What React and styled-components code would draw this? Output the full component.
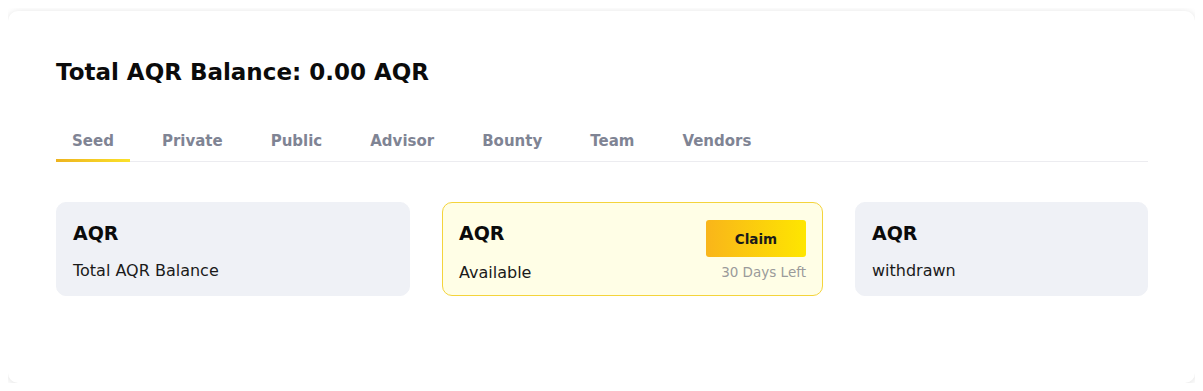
import React, { useState } from "react"
import styled, { createGlobalStyle } from "styled-components"

const Global = createGlobalStyle`
    body {
        margin: 8px;
        background: #ffffff;
        font-family: "DejaVu Sans", "Open Sans", sans-serif;
    }
`

const Panel = styled.div`
    margin-top: 3px;
    width: 1187px;
    box-sizing: border-box;
    padding: 46px 47px 87px 48px;
    background: #ffffff;
    border-radius: 10px;
    box-shadow: 0 1px 7px rgba(0, 0, 0, 0.13);
`

const Title = styled.h2`
    margin: 0;
    font-size: 23px;
    line-height: 30px;
    font-weight: 700;
    color: #0b0b0b;
`

const Tabs = styled.div`
    display: flex;
    gap: 16px;
    margin-top: 43px;
    border-bottom: 1px solid #ececf0;
`

const Tab = styled.button`
    background: none;
    border: none;
    padding: 0 16px 7px;
    font-family: inherit;
    font-size: 15px;
    line-height: 22px;
    font-weight: 700;
    color: #7f8494;
    cursor: pointer;
    border-bottom: 3px solid transparent;
    border-image: ${p => p.$active ? "linear-gradient(90deg, #edb31f, #fbe22b) 1" : "none"};
    margin-bottom: -1px;
`

const Cards = styled.div`
    display: grid;
    grid-template-columns: 354fr 381fr 293fr;
    gap: 32px;
    margin-top: 40px;
`

const Card = styled.div`
    box-sizing: border-box;
    height: 94px;
    padding: 14px 16px 0;
    border-radius: 10px;
    background: ${p => p.$highlight ? "#fffee6" : "#eff1f6"};
    border: 1px solid ${p => p.$highlight ? "#f4d43c" : "#eff1f6"};
    display: flex;
    justify-content: space-between;
`

const Col = styled.div`
    display: flex;
    flex-direction: column;
    align-items: ${p => p.$right ? "flex-end" : "flex-start"};
`

const Amount = styled.div`
    font-size: 19px;
    line-height: 32px;
    font-weight: 700;
    color: #0b0b0b;
`

const Label = styled.div`
    margin-top: ${p => p.$low ? "13px" : "11px"};
    font-size: 16px;
    line-height: 22px;
    color: #1a1a1a;
`

const ClaimButton = styled.button`
    width: 100px;
    height: 37px;
    margin-top: 3px;
    border: none;
    border-radius: 3px;
    background: linear-gradient(90deg, #f9b51a, #fee600);
    font-family: inherit;
    font-size: 13.5px;
    font-weight: 700;
    color: #1a1a1a;
    cursor: pointer;
`

const DaysLeft = styled.div`
    margin-top: 5px;
    font-size: 13.5px;
    line-height: 20px;
    color: #9a9a9a;
`

const tabs = ["Seed", "Private", "Public", "Advisor", "Bounty", "Team", "Vendors"]

const App = () => {
    const [active, setActive] = useState("Seed")
    return <>
        <Global />
        <Panel>
            <Title>Total AQR Balance: 0.00 AQR</Title>
            <Tabs>
                {tabs.map(t => <Tab key={t} $active={t === active} onClick={() => setActive(t)}>{t}</Tab>)}
            </Tabs>
            <Cards>
                <Card>
                    <Col>
                        <Amount>AQR</Amount>
                        <Label>Total AQR Balance</Label>
                    </Col>
                </Card>
                <Card $highlight>
                    <Col>
                        <Amount>AQR</Amount>
                        <Label $low>Available</Label>
                    </Col>
                    <Col $right>
                        <ClaimButton>Claim</ClaimButton>
                        <DaysLeft>30 Days Left</DaysLeft>
                    </Col>
                </Card>
                <Card>
                    <Col>
                        <Amount>AQR</Amount>
                        <Label>withdrawn</Label>
                    </Col>
                </Card>
            </Cards>
        </Panel>
    </>
}

export default App
